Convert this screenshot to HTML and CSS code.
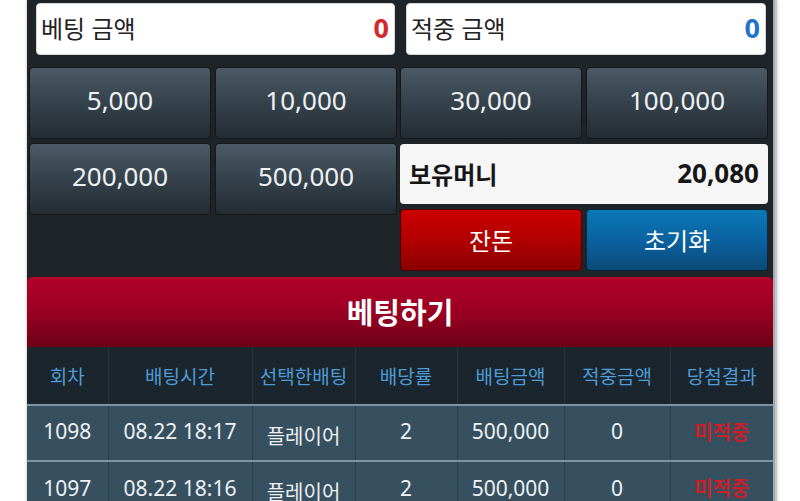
FILE: index.html
```html
<!DOCTYPE html>
<html lang="ko">
<head>
<meta charset="utf-8">
<link rel="stylesheet" href="styles.css">
</head>
<body>
<div class="wrap">
  <div class="panel">
    <div class="half half-left">
      <div class="field">
        <span class="field-label">베팅 금액</span>
        <span class="field-value red">0</span>
      </div>
      <div class="chips">
        <button class="chip">5,000</button>
        <button class="chip">10,000</button>
        <button class="chip">200,000</button>
        <button class="chip">500,000</button>
      </div>
    </div>
    <div class="half half-right">
      <div class="field">
        <span class="field-label">적중 금액</span>
        <span class="field-value blue">0</span>
      </div>
      <div class="chips">
        <button class="chip">30,000</button>
        <button class="chip">100,000</button>
      </div>
      <div class="money">
        <span class="money-label">보유머니</span>
        <span class="money-value">20,080</span>
      </div>
      <div class="actions">
        <button class="act act-red">잔돈</button>
        <button class="act act-blue">초기화</button>
      </div>
    </div>
  </div>
  <button class="bet">베팅하기</button>
  <table class="hist">
    <colgroup>
      <col class="c1"><col class="c2"><col class="c3"><col class="c4"><col class="c5"><col class="c6"><col class="c7">
    </colgroup>
    <thead>
      <tr>
        <th>회차</th><th>배팅시간</th><th>선택한배팅</th><th>배당률</th><th>배팅금액</th><th>적중금액</th><th>당첨결과</th>
      </tr>
    </thead>
    <tbody>
      <tr>
        <td>1098</td><td>08.22 18:17</td><td class="ko">플레이어</td><td>2</td><td>500,000</td><td>0</td><td class="miss">미적중</td>
      </tr>
      <tr>
        <td>1097</td><td>08.22 18:16</td><td class="ko">플레이어</td><td>2</td><td>500,000</td><td>0</td><td class="miss">미적중</td>
      </tr>
    </tbody>
  </table>
</div>
</body>
</html>
```
FILE: styles.css
```css
* { box-sizing: border-box; }
html, body { margin: 0; padding: 0; background: #ffffff; }
body {
  font-family: "Noto Sans", "Noto Sans CJK KR", sans-serif;
  overflow: hidden;
}
button { font-family: inherit; cursor: pointer; }

.wrap {
  margin-left: 27px;
  width: 746px;
  background: #1f2428;
  padding-top: 3px;
  box-shadow: 2px 0 0 #a4a9ad, 4px 0 0 #c4c7c9, 5px 0 3px rgba(0,0,0,0.15), -1px 0 2px rgba(0,0,0,0.15);
}

.panel { display: flex; }
.half { width: 373px; }
.half-left { padding-left: 2px; padding-right: 3px; }
.half-right { padding-left: 0; padding-right: 5px; }

.field {
  height: 52px;
  background: #ffffff;
  border: 1px solid #d4d6d8;
  border-radius: 4px;
  display: flex;
  align-items: center;
  justify-content: space-between;
  padding: 0 5px 3px 4px;
}
.half-left .field { margin-left: 7px; margin-right: 2px; }
.half-right .field { margin-left: 6px; margin-right: 2px; }
.field-label { font-size: 24px; color: #222; }
.field-value { font-size: 27px; font-weight: 700; }
.red { color: #d4262b; }
.blue { color: #1f72c8; }

.chips {
  margin-top: 12px;
  display: grid;
  grid-template-columns: 182px 182px;
  grid-auto-rows: 72px;
  gap: 4px;
}
.chip {
  border: 1px solid #14181b;
  border-radius: 4px;
  background: linear-gradient(to bottom, #4b5a66 0%, #37444e 45%, #242c33 100%);
  color: #eef1f3;
  font-size: 26px;
  padding: 0 0 6px 0;
}

.money {
  margin-top: 5px;
  height: 60px;
  background: #f6f6f6;
  border-radius: 4px;
  display: flex;
  align-items: center;
  justify-content: space-between;
  padding: 0 9px 2px 9px;
}
.money-label { font-size: 24px; font-weight: 700; color: #161616; }
.money-value { font-size: 26px; font-weight: 700; color: #161616; }

.actions {
  margin-top: 5px;
  display: grid;
  grid-template-columns: 182px 182px;
  gap: 4px;
  height: 62px;
}
.act {
  border-radius: 4px;
  color: #ffffff;
  font-size: 24px;
  padding: 0 0 2px 0;
}
.act-red {
  border: 1px solid #4a0000;
  background: linear-gradient(to bottom, #cc0000 0%, #b20000 50%, #8a0000 100%);
}
.act-blue {
  border: 1px solid #06283f;
  background: linear-gradient(to bottom, #0b78b6 0%, #0a62a0 50%, #0c4a78 100%);
}

.bet {
  display: block;
  width: 746px;
  height: 70px;
  margin-top: 6px;
  border: 0;
  border-radius: 5px 5px 0 0;
  background: linear-gradient(to bottom, #b2002a 0%, #9a0022 50%, #6c0016 100%);
  color: #ffffff;
  font-size: 29px;
  font-weight: 700;
  padding: 0 0 2px 0;
}

.hist {
  width: 746px;
  border-collapse: collapse;
  table-layout: fixed;
}
.c1 { width: 81px; }
.c2 { width: 144px; }
.c3 { width: 103px; }
.c4 { width: 102px; }
.c5 { width: 107px; }
.c6 { width: 106px; }
.c7 { width: 103px; }

.hist th {
  height: 58px;
  background: #1b252d;
  color: #4d9cd6;
  font-size: 19px;
  font-weight: 400;
  border-left: 1px solid #27333d;
  padding: 0;
}
.hist th:first-child, .hist td:first-child { border-left: 0; }
.hist td {
  height: 56px;
  background: #37505f;
  color: #eef2f5;
  font-size: 21px;
  text-align: center;
  border-top: 2px solid #7c93a3;
  border-left: 1px solid #2a3e4c;
  padding: 0 0 4px 0;
}
.hist td.ko { font-size: 20px; padding-top: 4px; padding-bottom: 0; }
.hist td.miss { color: #c81f2a; font-size: 20px; font-weight: 700; }
```
